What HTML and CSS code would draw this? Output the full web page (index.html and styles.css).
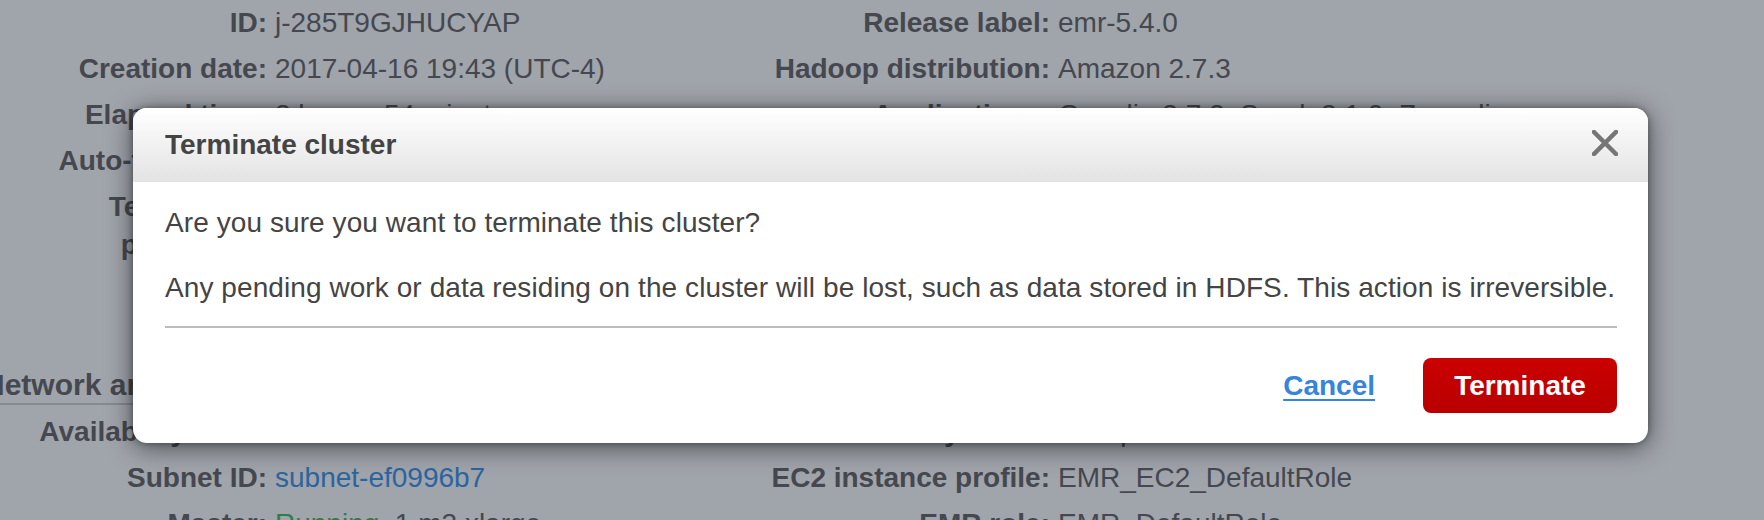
FILE: index.html
```html
<!DOCTYPE html>
<html>
<head>
<meta charset="utf-8">
<title>Terminate cluster</title>
<link rel="stylesheet" href="styles.css">
</head>
<body>
<div class="page">
  <section class="summary">
    <div class="col col-left">
      <div class="row"><span class="label">ID:</span><span class="value">j-285T9GJHUCYAP</span></div>
      <div class="row"><span class="label">Creation date:</span><span class="value">2017-04-16 19:43 (UTC-4)</span></div>
      <div class="row"><span class="label">Elapsed time:</span><span class="value">2 hours, 54 minutes</span></div>
      <div class="row"><span class="label">Auto-terminate:</span><span class="value">No</span></div>
      <div class="row row-tall"><span class="label">Termination protection:</span><span class="value">Off <span class="link">Change</span></span></div>
    </div>
    <div class="col col-right">
      <div class="row"><span class="label">Release label:</span><span class="value">emr-5.4.0</span></div>
      <div class="row"><span class="label">Hadoop distribution:</span><span class="value">Amazon 2.7.3</span></div>
      <div class="row"><span class="label">Applications:</span><span class="value">Ganglia 3.7.2, Spark 2.1.0, Zeppelin</span></div>
      <div class="row"><span class="label">Log URI:</span><span class="value">s3://aws-logs-us-east-1/elasticmapreduce/</span></div>
      <div class="row"><span class="label">EMRFS consistent view:</span><span class="value">Disabled</span></div>
    </div>
  </section>
  <h2 class="section-title">Network and security</h2>
  <section class="summary">
    <div class="col col-left">
      <div class="row"><span class="label">Availability zone:</span><span class="value">us-east-1a</span></div>
      <div class="row"><span class="label">Subnet ID:</span><span class="value link">subnet-ef0996b7</span></div>
      <div class="row"><span class="label">Master:</span><span class="value"><span class="ok">Running</span>, 1 m3.xlarge</span></div>
    </div>
    <div class="col col-right">
      <div class="row"><span class="label">Key name:</span><span class="value">emrkp</span></div>
      <div class="row"><span class="label">EC2 instance profile:</span><span class="value">EMR_EC2_DefaultRole</span></div>
      <div class="row"><span class="label">EMR role:</span><span class="value">EMR_DefaultRole</span></div>
    </div>
  </section>
</div>

<div class="modal" role="dialog">
  <div class="modal-header">
    <h1 class="modal-title">Terminate cluster</h1>
    <button class="close" aria-label="Close">
      <svg width="26" height="26" viewBox="0 0 26 26"><path d="M2 2 L24 24 M24 2 L2 24" stroke="#767676" stroke-width="4.5" stroke-linecap="square" fill="none"/></svg>
    </button>
  </div>
  <div class="modal-body">
    <p class="msg msg-first">Are you sure you want to terminate this cluster?</p>
    <p class="msg">Any pending work or data residing on the cluster will be lost, such as data stored in HDFS. This action is irreversible.</p>
  </div>
  <div class="modal-footer">
    <a class="cancel" href="#">Cancel</a>
    <button class="btn-terminate">Terminate</button>
  </div>
</div>
</body>
</html>
```
FILE: styles.css
```css
* { box-sizing: border-box; }
html, body {
  margin: 0;
  padding: 0;
  height: 100%;
  overflow: hidden;
}
body {
  background: #a0a4ab;
  font-family: "Liberation Sans", Arial, Helvetica, sans-serif;
  font-size: 28px;
  color: #45484f;
}
.page {
  width: 1764px;
}
.summary {
  display: flex;
}
.col {
  display: flex;
  flex-direction: column;
}
.col-left { width: 660px; }
.col-right { width: 1000px; }
.row {
  display: flex;
  height: 46px;
  align-items: center;
  line-height: 38px;
}
.row-tall {
  height: auto;
  align-items: flex-start;
  padding-top: 4px;
}
.label {
  font-weight: bold;
  text-align: right;
  flex: none;
}
.col-left .label { width: 267px; }
.col-right .label { width: 390px; }
.value {
  margin-left: 8px;
  white-space: nowrap;
}
.link { color: #2c64a0; }
.ok { color: #2b8046; }
.summary:first-child {
  height: 367px;
}
.section-title {
  margin: 0 0 4px -17px;
  width: 1620px;
  font-size: 30px;
  font-weight: bold;
  line-height: 36px;
  border-bottom: 2px solid #868a91;
}

.modal {
  position: absolute;
  left: 133px;
  top: 108px;
  width: 1515px;
  height: 335px;
  background: #fff;
  border-radius: 14px;
  box-shadow: 0 4px 26px rgba(0, 0, 0, 0.55), 0 0 6px rgba(0, 0, 0, 0.35);
  display: flex;
  flex-direction: column;
  overflow: hidden;
  color: #444;
}
.modal-header {
  height: 74px;
  flex: none;
  background: linear-gradient(#ffffff, #e3e3e3);
  display: flex;
  align-items: center;
  justify-content: space-between;
  padding: 0 30px 0 32px;
}
.modal-title {
  margin: 0;
  font-size: 28px;
  font-weight: bold;
  color: #444;
  line-height: 36px;
}
.close {
  border: 0;
  background: none;
  padding: 0;
  width: 26px;
  height: 26px;
  display: block;
  margin-top: -4px;
}
.close svg { display: block; }
.modal-body {
  margin: 0 31px 0 32px;
  padding-top: 21px;
  padding-bottom: 18px;
  border-bottom: 2px solid #bcbcbc;
}
.msg {
  margin: 0;
  line-height: 40px;
  letter-spacing: 0.08px;
  white-space: nowrap;
}
.msg-first { margin-bottom: 25px; }
.modal-footer {
  display: flex;
  justify-content: flex-end;
  align-items: center;
  padding: 30px 31px 0 0;
}
.cancel {
  color: #3585dc;
  font-weight: bold;
  text-decoration: underline;
  text-decoration-thickness: 2px;
  text-underline-offset: 4px;
  margin-right: 48px;
}
.btn-terminate {
  height: 55px;
  padding: 0 30px;
  border: 0;
  border-radius: 8px;
  background: linear-gradient(#cb0000, #b90000);
  color: #fff;
  font-family: "Liberation Sans", Arial, Helvetica, sans-serif;
  font-size: 28px;
  font-weight: bold;
  width: 194px;
}
```
